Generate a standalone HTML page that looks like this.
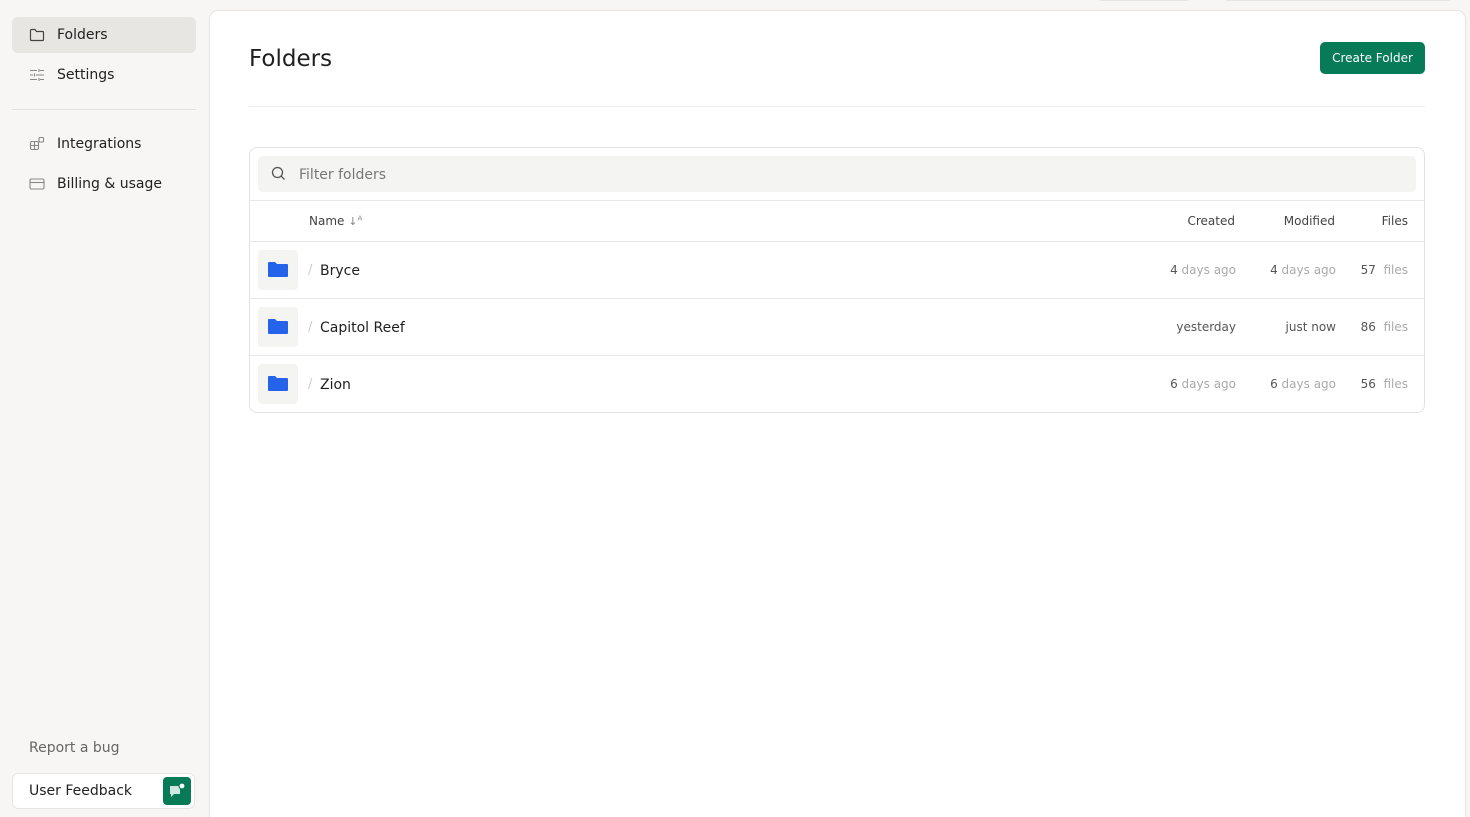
<!DOCTYPE html>
<html style="overflow:hidden;height:817px"><head><meta charset="utf-8"><style>
*{box-sizing:border-box;margin:0;padding:0}
body{width:1470px;height:817px;background:#f7f6f4;font-family:"DejaVu Sans","Liberation Sans",sans-serif;position:relative;overflow:hidden;color:#1f1f1f}
.nav{position:absolute;left:12px;width:184px;height:36px;border-radius:6px;font-size:14px;color:#222}
.nav svg{position:absolute;left:17px;top:11px}
.nav span{position:absolute;left:45px;top:10px}
.main{position:absolute;left:209px;top:10px;width:1257px;height:815px;background:#fff;border:1px solid #e6e5e2;border-radius:9px}
.abs{position:absolute}
.row{position:absolute;left:0;width:1174px;height:57px;border-top:1px solid #e8e7e4}
.tile{position:absolute;left:8px;top:8px;width:40px;height:40px;background:#f4f4f2;border-radius:4px}
.tile svg{position:absolute;left:10px;top:11px}
.nm{position:absolute;left:70px;top:21px;font-size:14px;color:#1f1f1f}
.sl{position:absolute;left:58px;top:21px;font-size:13px;color:#ccc}
.c{position:absolute;top:21px;font-size:12px;color:#aaa;text-align:right;white-space:nowrap}
.c b{font-weight:normal;color:#555}
</style></head><body>
<div class="abs" style="left:1098px;top:-6px;width:92px;height:7px;border:1px solid #e6e5e2;border-radius:5px;background:#f7f6f4"></div>
<div class="abs" style="left:1224px;top:-6px;width:228px;height:7px;border:1px solid #e6e5e2;border-radius:5px;background:#f7f6f4"></div>

<div class="nav" style="top:17px;background:#e7e6e3">
<svg width="16" height="14" viewBox="0 0 16 14" fill="none" stroke="#444" stroke-width="1.2"><path d="M1.5 2.5v9a1 1 0 0 0 1 1h11a1 1 0 0 0 1-1v-7a1 1 0 0 0-1-1H7.5L6 1.5H2.5a1 1 0 0 0-1 1z"/></svg>
<span>Folders</span></div>
<div class="nav" style="top:57px">
<svg width="16" height="14" viewBox="0 0 16 14" fill="none" stroke="#888" stroke-width="1.1"><path d="M1 2.5h7M11 2.5h4M10 1v3M1 7h3M7 7h8M5.5 5.5v3M1 11.5h7M11 11.5h4M10 10v3"/></svg>
<span>Settings</span></div>
<div class="abs" style="left:12px;top:109px;width:184px;height:1px;background:#e3e2df"></div>
<div class="nav" style="top:126px">
<svg width="16" height="16" viewBox="0 0 16 16" fill="none" stroke="#888" stroke-width="1.1" style="top:10px"><rect x="1.5" y="5.5" width="8" height="8" rx="1.5"/><path d="M5.5 5.5v8M1.5 9.5h8"/><rect x="10" y="1.5" width="4.5" height="4.5" rx="1"/></svg>
<span>Integrations</span></div>
<div class="nav" style="top:166px">
<svg width="16" height="14" viewBox="0 0 16 14" fill="none" stroke="#888" stroke-width="1.1"><rect x="1" y="2" width="14" height="10" rx="1.5"/><path d="M1 5.5h14"/></svg>
<span>Billing &amp; usage</span></div>

<div class="abs" style="left:29px;top:740px;font-size:14px;color:#666">Report a bug</div>
<div class="abs" style="left:12px;top:773px;width:183px;height:36px;background:#fff;border:1px solid #e6e5e2;border-radius:6px">
<span class="abs" style="left:16px;top:9px;font-size:14px;color:#222">User Feedback</span>
<div class="abs" style="left:150px;top:3px;width:28px;height:28px;background:#077a58;border-radius:4px">
<svg width="28" height="28" viewBox="0 0 28 28"><path d="M7 9h10v8h-6l-3 3v-3H7z" fill="#cfe8df"/><circle cx="19" cy="9" r="3" fill="#fff" stroke="#077a58" stroke-width="1.2"/></svg></div>
</div>

<div class="main">
<div class="abs" style="left:39px;top:35px;font-size:23px;color:#1f1f1f">Folders</div>
<div class="abs" style="left:1110px;top:31px;width:105px;height:32px;background:#077a58;border-radius:5px;color:#fff;font-size:12px;text-align:center;line-height:32px">Create Folder</div>
<div class="abs" style="left:39px;top:95px;width:1176px;height:1px;background:#efeeec"></div>
<div class="abs" style="left:39px;top:136px;width:1176px;height:266px;border:1px solid #e3e2df;border-radius:8px">
 <div class="abs" style="left:8px;top:8px;width:1158px;height:36px;background:#f4f4f2;border-radius:5px">
  <svg class="abs" style="left:13px;top:10px" width="15" height="15" viewBox="0 0 15 15" fill="none" stroke="#555" stroke-width="1.3"><circle cx="6.5" cy="6.5" r="5"/><path d="M10.2 10.2L13.5 13.5"/></svg>
  <span class="abs" style="left:41px;top:11px;font-size:14px;color:#777">Filter folders</span>
 </div>
 <div class="row" style="top:52px;height:41px">
  <span class="abs" style="left:59px;top:13px;font-size:12px;color:#444">Name <span style="color:#888;font-size:11px">↓<sup style="font-size:7px">A</sup></span></span>
  <span class="c" style="right:189px;top:13px;color:#444">Created</span>
  <span class="c" style="right:89px;top:13px;color:#444">Modified</span>
  <span class="c" style="right:16px;top:13px;color:#444">Files</span>
 </div>
 <div class="row" style="top:93px"><div class="tile"><svg width="20" height="17" viewBox="0 0 20 17"><path d="M0 2a1 1 0 0 1 1-1h6l2 2h10a1 1 0 0 1 1 1v11a1 1 0 0 1-1 1H1a1 1 0 0 1-1-1z" fill="#2563eb"/></svg></div><span class="sl">/</span><span class="nm">Bryce</span>
  <span class="c" style="right:188px"><b>4</b> days ago</span><span class="c" style="right:88px"><b>4</b> days ago</span><span class="c" style="right:16px"><b>57</b>&nbsp; files</span></div>
 <div class="row" style="top:150px"><div class="tile"><svg width="20" height="17" viewBox="0 0 20 17"><path d="M0 2a1 1 0 0 1 1-1h6l2 2h10a1 1 0 0 1 1 1v11a1 1 0 0 1-1 1H1a1 1 0 0 1-1-1z" fill="#2563eb"/></svg></div><span class="sl">/</span><span class="nm">Capitol Reef</span>
  <span class="c" style="right:188px;color:#555">yesterday</span><span class="c" style="right:88px;color:#555">just now</span><span class="c" style="right:16px"><b>86</b>&nbsp; files</span></div>
 <div class="row" style="top:207px"><div class="tile"><svg width="20" height="17" viewBox="0 0 20 17"><path d="M0 2a1 1 0 0 1 1-1h6l2 2h10a1 1 0 0 1 1 1v11a1 1 0 0 1-1 1H1a1 1 0 0 1-1-1z" fill="#2563eb"/></svg></div><span class="sl">/</span><span class="nm">Zion</span>
  <span class="c" style="right:188px"><b>6</b> days ago</span><span class="c" style="right:88px"><b>6</b> days ago</span><span class="c" style="right:16px"><b>56</b>&nbsp; files</span></div>
</div>
</div>
</body></html>
